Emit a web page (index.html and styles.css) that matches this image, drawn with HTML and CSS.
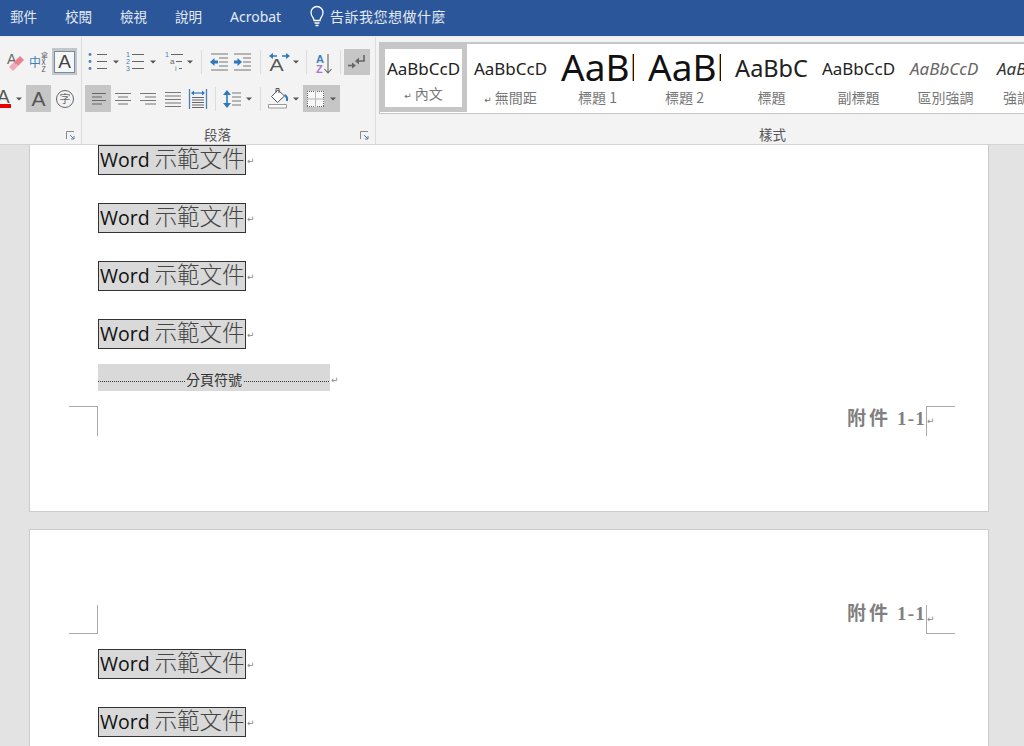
FILE: index.html
```html
<!DOCTYPE html>
<html lang="zh-Hant">
<head>
<meta charset="utf-8">
<title>Word 示範文件</title>
<link rel="stylesheet" href="styles.css">
</head>
<body>
<svg class="defs" width="0" height="0" aria-hidden="true">
  <symbol id="caret" viewBox="0 0 8 24"><path d="M1 10.500h6l-3 3z" fill="#555"/></symbol>
  <symbol id="launcher" viewBox="0 0 10 10"><path d="M.5 8V.5H8" fill="none" stroke="#888"/><path d="M4 4l4 4M8 5v3H5" fill="none" stroke="#5b7fa8"/></symbol>
</svg>
<nav class="tabs">
  <span class="tab">郵件</span><span class="tab">校閱</span><span class="tab">檢視</span><span class="tab">說明</span><span class="tab tab-latin">Acrobat</span>
  <span class="tell">
    <svg width="18" height="22" viewBox="0 0 18 22"><path d="M6 15.500c0-3-3-4-3-8a6 6 0 0 1 12 0c0 4-3 5-3 8zM6.500 18h5M7.500 20.500h3" fill="none" stroke="#fff" stroke-width="1.300"/></svg>
    告訴我您想做什麼
  </span>
</nav>

<section class="ribbon">
  <div class="group group-font">
    <div class="row">
      <svg class="ml4" width="22" height="26" viewBox="0 0 22 26"><text x="3" y="15" class="ic-a">A</text><path d="M16 7l4 4-6 6-4-4z" fill="#e9828f"/><path d="M10 13l4 4-5 5-4-4z" fill="#f2a9b5"/></svg>
      <svg class="ml3" width="20" height="26" viewBox="0 0 20 26"><text x="0" y="18" class="ic-zh">中</text><text x="12" y="9" class="ic-tiny">拿</text><text x="12.500" y="16" class="ic-tiny">X</text><text x="12.500" y="23" class="ic-tiny">Z</text></svg>
      <span class="active boxed ml3"><span class="boxed-a">A</span></span>
    </div>
    <div class="row">
      <svg class="neg" width="11" height="26" viewBox="0 0 11 26"><text x="-3" y="17" class="ic-a-big">A</text><rect y="18" width="11" height="4" fill="#e60000"/></svg>
      <svg class="ml4" width="8" height="24"><use href="#caret"/></svg>
      <span class="active letter ml3">A</span>
      <svg class="ml2" width="24" height="26" viewBox="0 0 24 26"><circle cx="12" cy="13" r="8.500" fill="none" stroke="#666"/><text x="6.500" y="17" class="ic-zi">字</text></svg>
    </div>
    <svg class="launcher" width="10" height="10"><use href="#launcher"/></svg>
  </div>

  <div class="group group-para">
    <div class="row">
      <svg class="ml5" width="24" height="26" viewBox="0 0 24 26"><path d="M10 5.500h10M10 12.500h10M10 19.500h10" stroke="#666" stroke-width="1.100"/><circle cx="3" cy="5.500" r="1.400" fill="#4a7fb5"/><circle cx="3" cy="12.500" r="1.400" fill="#4a7fb5"/><circle cx="3" cy="19.500" r="1.400" fill="#4a7fb5"/></svg>
      <svg class="ml1" width="8" height="24"><use href="#caret"/></svg>
      <svg class="ml4" width="24" height="26" viewBox="0 0 24 26"><path d="M8 5.500h12M8 12.500h12M8 19.500h12" stroke="#666" stroke-width="1.100"/><text x="2" y="8" class="ic-num">1</text><text x="2" y="15" class="ic-num">2</text><text x="2" y="22" class="ic-num">3</text></svg>
      <svg class="ml1" width="8" height="24"><use href="#caret"/></svg>
      <svg class="ml5" width="24" height="26" viewBox="0 0 24 26"><path d="M9 5.500h12M14 12.500h6M17 19.500h3" stroke="#666" stroke-width="1.100"/><text x="3" y="8" class="ic-num">1</text><text x="8" y="15" class="ic-num-g">a</text><text x="13" y="22" class="ic-num">i</text></svg>
      <svg width="8" height="24"><use href="#caret"/></svg>
      <i class="sep ml7"></i>
      <svg class="ml5" width="24" height="26" viewBox="0 0 24 26"><path d="M4 5h17M12 9h9M12 13h9M12 17h9M4 21h17" stroke="#777" stroke-width="1.100"/><path d="M3 13l4.500-4v2.500H11v3H7.500V17z" fill="#2f78bd"/></svg>
      <svg class="ml1" width="24" height="26" viewBox="0 0 24 26"><path d="M2 5h17M11 9h8M11 13h8M11 17h8M2 21h17" stroke="#777" stroke-width="1.100"/><path d="M10 13l-4.500-4v2.500H2v3h3.500V17z" fill="#2f78bd"/></svg>
      <i class="sep ml4"></i>
      <svg class="ml7" width="24" height="26" viewBox="0 0 24 26"><path d="M4 7h5M14 7h5" stroke="#2f78bd" stroke-width="1.400"/><path d="M1 7l4-3v6zM22 7l-4-3v6z" fill="#2f78bd"/><text x="0" y="22" class="ic-a-mid" transform="translate(1.500 0) scale(1.250 1)">A</text></svg>
      <svg width="8" height="24"><use href="#caret"/></svg>
      <i class="sep ml6"></i>
      <svg class="ml6" width="24" height="26" viewBox="0 0 24 26"><text x="3" y="14" class="ic-az-a">A</text><text x="3" y="24" class="ic-az-z">Z</text><path d="M15 5v19M11.500 20l3.500 4 3.500-4" fill="none" stroke="#666" stroke-width="1.100"/></svg>
      <i class="sep ml3"></i>
      <span class="active show ml3"><svg width="24" height="26" viewBox="0 0 24 26"><path d="M19 6v6h-6" fill="none" stroke="#666" stroke-width="1.600"/><path d="M14 8.500l-4 3.500 4 3.500z" fill="#666"/><path d="M3 16.500h5" stroke="#666" stroke-width="1.600"/><path d="M7 13.500l4 3-4 3z" fill="#666"/></svg></span>
    </div>
    <div class="row">
      <span class="active align ml3"><svg width="24" height="26" viewBox="0 0 24 26"><path d="M6 7.500h14M6 11h10M6 14.500h14M6 18h10" stroke="#666" stroke-width="1.100"/></svg></span>
      <svg width="24" height="26" viewBox="0 0 24 26"><path d="M4 7.500h16M7 11h10M4 14.500h16M7 18h10" stroke="#777" stroke-width="1.100"/></svg>
      <svg class="ml1" width="24" height="26" viewBox="0 0 24 26"><path d="M4 7.500h16M9 11h11M4 14.500h16M9 18h11" stroke="#777" stroke-width="1.100"/></svg>
      <svg class="ml1" width="24" height="26" viewBox="0 0 24 26"><path d="M4 6.500h16M4 10h16M4 13.500h16M4 17h16M4 20.500h16" stroke="#777" stroke-width="1.100"/></svg>
      <svg class="ml1" width="24" height="26" viewBox="0 0 24 26"><path d="M3.500 3v20M20.500 3v20" stroke="#4a82b8" stroke-width="1.300"/><path d="M6 11.500h12M6 14h12M6 16.500h12M6 19h12M6 21.500h12" stroke="#666"/><path d="M6 7h12" stroke="#2f78bd" stroke-width="1.200"/><path d="M5 7l3-2.500v5zM19 7l-3-2.500v5z" fill="#2f78bd"/></svg>
      <i class="sep ml5"></i>
      <svg class="ml4" width="24" height="26" viewBox="0 0 24 26"><path d="M7 6v14" stroke="#2f78bd" stroke-width="1.600"/><path d="M3 9l4-5 4 5zM3 17l4 5 4-5z" fill="#2f78bd"/><path d="M12 7h9M12 11h9M12 15h9M12 19h9" stroke="#777" stroke-width="1.100"/></svg>
      <svg class="ml1" width="8" height="24"><use href="#caret"/></svg>
      <i class="sep ml7"></i>
      <svg class="ml5" width="24" height="26" viewBox="0 0 24 26"><path d="M2.500 18.500h18v3.500h-18z" fill="#fafafa" stroke="#999"/><path d="M12 4l-6.500 6.500 6 6 7-6.500z" fill="#fff" stroke="#555"/><path d="M10 6.500V2.500h3V7" fill="none" stroke="#555"/><path d="M18.500 9c2 1 3 3 2.500 6" fill="none" stroke="#2f78bd" stroke-width="2"/></svg>
      <svg class="ml2" width="8" height="24"><use href="#caret"/></svg>
      <span class="active borders ml3">
        <svg width="26" height="26" viewBox="0 0 26 26"><rect x="4" y="5" width="17" height="16" fill="#f8f8f8"/><path d="M4 5.500h17M4 20.500h17M4.500 5v16M20.500 5v16" stroke="#666" stroke-dasharray="1 1"/><path d="M4 13h17M12.500 5v16" stroke="#b5b5b5"/></svg>
        <svg width="8" height="24"><use href="#caret"/></svg>
      </span>
    </div>
    <div class="group-label label-para">段落</div>
    <svg class="launcher" width="10" height="10"><use href="#launcher"/></svg>
  </div>

  <div class="group group-styles">
    <div class="gallery">
      <div class="style style-selected"><div class="preview p-normal">AaBbCcD</div><div class="name"><i class="mark">↵</i> 內文</div></div>
      <div class="style"><div class="preview p-normal">AaBbCcD</div><div class="name"><i class="mark">↵</i> 無間距</div></div>
      <div class="style"><div class="preview p-h1">AaBbC</div><div class="name">標題 1</div></div>
      <div class="style"><div class="preview p-h1">AaBbC</div><div class="name">標題 2</div></div>
      <div class="style"><div class="preview p-title">AaBbC</div><div class="name">標題</div></div>
      <div class="style"><div class="preview p-normal">AaBbCcD</div><div class="name">副標題</div></div>
      <div class="style"><div class="preview p-normal p-em">AaBbCcD</div><div class="name">區別強調</div></div>
      <div class="style style-last"><div class="preview p-normal p-em p-dark">AaBbCcD</div><div class="name">強調</div></div>
    </div>
    <div class="group-label label-styles">樣式</div>
  </div>
</section>

<main class="doc">
  <article class="page page-one">
    <p class="para"><span class="sample"><span class="latin">Word</span> 示範文件</span><i class="mark">↵</i></p>
    <p class="para"><span class="sample"><span class="latin">Word</span> 示範文件</span><i class="mark">↵</i></p>
    <p class="para"><span class="sample"><span class="latin">Word</span> 示範文件</span><i class="mark">↵</i></p>
    <p class="para para-last"><span class="sample"><span class="latin">Word</span> 示範文件</span><i class="mark">↵</i></p>
    <div class="break-line"><div class="break-band"><span>分頁符號</span></div><i class="mark">↵</i></div>
    <header class="page-head head-bottom">
      <i class="crop crop-tl"></i>
      <span class="annex"><span class="annex-zh">附件</span> 1-1</span><i class="crop crop-tr"><i class="mark">↵</i></i>
    </header>
  </article>
  <article class="page page-two">
    <header class="page-head head-top">
      <i class="crop crop-bl"></i>
      <span class="annex"><span class="annex-zh">附件</span> 1-1</span><i class="crop crop-br"><i class="mark">↵</i></i>
    </header>
    <p class="para"><span class="sample"><span class="latin">Word</span> 示範文件</span><i class="mark">↵</i></p>
    <p class="para"><span class="sample"><span class="latin">Word</span> 示範文件</span><i class="mark">↵</i></p>
  </article>
</main>
</body>
</html>
```

FILE: styles.css
```css
* { box-sizing: border-box; }
html, body { margin: 0; height: 100%; }
body {
  width: 1024px;
  height: 746px;
  overflow: hidden;
  display: flex;
  flex-direction: column;
  background: #e3e3e3;
  font-family: "Noto Sans", "Noto Sans CJK TC", sans-serif;
}
i { font-style: normal; }
.defs { position: absolute; }
svg { display: block; flex: none; }

/* tabs */
.tabs {
  height: 36px;
  flex: none;
  display: flex;
  align-items: center;
  padding: 0 0 4px 10px;
  background: #2b579a;
  color: #e4eaf3;
  font-size: 13.500px;
  font-family: "Noto Sans CJK TC", sans-serif;
}
.tab { width: 55px; flex: none; }
.tab-latin { width: 78px; font-family: "Noto Sans", sans-serif; font-size: 14px; }
.tell { display: flex; align-items: center; gap: 4px; font-size: 14px; letter-spacing: .5px; }

/* ribbon */
.ribbon {
  height: 109px;
  flex: none;
  display: flex;
  background: #f3f3f3;
  border-top: 1px solid #e8ecee;
  border-bottom: 1px solid #d4d4d4;
}
.group { position: relative; flex: none; padding-top: 11px; }
.group-font { width: 82px; border-right: 1px solid #dcdcdc; overflow: hidden; }
.group-para { width: 293px; }
.group-styles { flex: 1; min-width: 0; overflow: hidden; padding: 5px 0 0 3px; border-left: 1px solid #dcdcdc; }
.row { display: flex; align-items: center; height: 27px; }
.row + .row { margin-top: 10px; }
.group-label {
  position: absolute;
  top: 89px;
  font-size: 13.500px;
  line-height: 16px;
  color: #555;
  font-family: "Noto Sans CJK TC", sans-serif;
}
.label-para { left: 122px; }
.label-styles { left: 383px; }
.launcher { position: absolute; right: 5px; top: 94px; }

.ml1 { margin-left: 1px; } .ml2 { margin-left: 2px; } .ml3 { margin-left: 3px; }
.ml4 { margin-left: 4px; } .ml5 { margin-left: 5px; } .ml6 { margin-left: 6px; } .ml7 { margin-left: 7px; }
.sep { width: 1px; height: 24px; background: #dcdcdc; flex: none; }
.active { background: #c6c6c6; display: flex; align-items: center; justify-content: center; height: 26px; flex: none; }
.boxed { width: 25px; height: 27px; }
.boxed-a {
  width: 21px; height: 22px;
  background: #f7f7f7;
  border: 1px solid #6f8db0;
  text-align: center;
  font: 19px/20px "Liberation Sans", sans-serif;
  color: #444;
}
.letter { width: 25px; font: 21px/26px "Liberation Sans", sans-serif; color: #555; height: 27px; }
.show { width: 26px; }
.align { width: 26px; height: 27px; }
.borders { width: 37px; height: 27px; justify-content: flex-start; }

.ic-a { font: 14px "Liberation Sans", sans-serif; fill: #666; }
.ic-a-big { font: 19px "Liberation Sans", sans-serif; fill: #555; }
.ic-a-mid { font: 17px "Liberation Sans", sans-serif; fill: #555; }
.ic-zh { font: 12px "Noto Sans CJK TC", sans-serif; fill: #3d7fba; }
.ic-tiny { font: 7px "Noto Sans CJK TC", sans-serif; fill: #555; }
.ic-zi { font: 11px "Noto Sans CJK TC", sans-serif; fill: #666; }
.ic-num { font: 7px "Liberation Sans", sans-serif; fill: #3d7fba; }
.ic-num-g { font: 8px "Liberation Sans", sans-serif; fill: #666; }
.ic-az-a { font: bold 11px "Liberation Sans", sans-serif; fill: #3d7fba; }
.ic-az-z { font: bold 11px "Liberation Sans", sans-serif; fill: #a878c0; }

/* style gallery */
.gallery {
  display: flex;
  height: 72px;
  background: #fff;
  border: 1px solid #c6c6c6;
  border-top-width: 2px;
  border-right: 0;
  overflow: hidden;
}
.style { width: 87px; flex: none; height: 68px; display: flex; flex-direction: column; align-items: center; overflow: hidden; }
.style-last { width: 56px; }
.style-selected { border: 5px solid #c6c6c6; }
.style-selected .preview { height: 35px; line-height: 40px; }
.style-selected .name { margin-top: 0; }
.preview {
  height: 40px;
  white-space: nowrap;
  color: #222;
  font-family: "Noto Sans", sans-serif;
  line-height: 50px;
  overflow: hidden;
  width: 100%;
  text-align: center;
}
.p-normal { font-size: 17px; }
.p-h1 { width: 80px; align-self: flex-start; font-size: 37px; text-align: left; padding-left: 7px; line-height: 46px; color: #111; }
.p-title { font-size: 23.500px; line-height: 49px; }
.p-em { width: 80px; align-self: flex-start; font-style: italic; color: #666; text-align: left; padding-left: 8px; }
.style-last .p-em { width: 100%; }
.p-dark { color: #333; }
.name {
  margin-top: 4px;
  font: 14px/18px "Noto Sans CJK TC", sans-serif;
  color: #777;
  white-space: nowrap;
}
.mark { font: 9px "DejaVu Sans", sans-serif; color: #888; }
.name .mark { color: #666; }

/* document */
.doc { flex: 1; min-height: 0; overflow: hidden; padding-left: 29px; }
.page {
  width: 960px;
  background: #fff;
  border: 1px solid #cbcbcb;
  padding-left: 68px;
}
.page-one { border-top: 0; height: 367px; }
.page-two { margin-top: 17px; height: 300px; padding-top: 75px; }
.para {
  margin: 0 0 28px;
  height: 30px;
  display: flex;
  align-items: center;
}
.para-last { margin-bottom: 15px; }
.sample {
  width: 148px;
  height: 30px;
  flex: none;
  background: #d9d9d9;
  border: 1px solid #333;
  padding-left: 1px;
  font: 300 22.500px/22px "Noto Sans CJK TC", sans-serif;
  color: #444;
  white-space: nowrap;
  overflow: hidden;
}
.latin { font: 400 19.500px/22px "Open Sans", sans-serif; color: #111; }
.para .mark { margin: 1px 0 0 1px; }
.break-line { display: flex; align-items: center; height: 27px; }
.break-band {
  width: 232px;
  height: 27px;
  display: flex;
  align-items: center;
  justify-content: center;
  background-color: #d9d9d9;
  background-image: linear-gradient(to right, #333 50%, transparent 50%);
  background-size: 2px 1px;
  background-repeat: repeat-x;
  background-position: 0 65%;
}
.break-band span {
  margin-top: 2px;
  background: #d9d9d9;
  padding: 0 1px;
  font: 14px/14px "Noto Sans CJK TC", sans-serif;
  color: #333;
}
.break-line .mark { margin: 4px 0 0 1px; }
.page-head {
  display: flex;
  margin-left: -29px;
  width: 886px;
}
.head-bottom { margin-top: 15px; align-items: flex-start; }
.head-top { margin-bottom: 15px; align-items: flex-start; height: 29px; }
.crop { width: 29px; height: 30px; flex: none; display: block; border: 0 solid #aaa; position: relative; }
.crop-tl { border-top-width: 1px; border-right-width: 1px; }
.crop-tr { border-top-width: 1px; border-left-width: 1px; }
.crop-bl { border-bottom-width: 1px; border-right-width: 1px; height: 29px; }
.crop-br { border-bottom-width: 1px; border-left-width: 1px; height: 29px; }
.crop .mark { position: absolute; left: 0; top: 9px; }
.annex {
  margin-left: auto;
  margin-top: 1px;
  font: bold 19px/24px "Liberation Serif", "Noto Sans CJK TC", serif;
  letter-spacing: 1.200px;
  color: #808080;
  white-space: nowrap;
}
.annex-zh { letter-spacing: 3px; }
.head-top .annex { margin-top: -3px; }
```
